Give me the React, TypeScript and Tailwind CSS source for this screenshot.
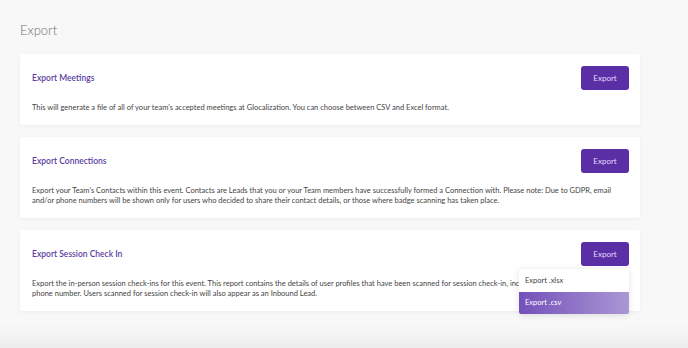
const cards = [
  {
    title: "Export Meetings",
    text: "This will generate a file of all of your team's accepted meetings at Glocalization. You can choose between CSV and Excel format.",
  },
  {
    title: "Export Connections",
    text: "Export your Team's Contacts within this event. Contacts are Leads that you or your Team members have successfully formed a Connection with. Please note: Due to GDPR, email and/or phone numbers will be shown only for users who decided to share their contact details, or those where badge scanning has taken place.",
  },
  {
    title: "Export Session Check In",
    text: "Export the in-person session check-ins for this event. This report contains the details of user profiles that have been scanned for session check-in, including names, emails and phone number. Users scanned for session check-in will also appear as an Inbound Lead.",
    menu: true,
  },
];

function ExportCard({ title, text, menu }: { title: string; text: string; menu?: boolean }) {
  return (
    <div className="rounded-[2px] bg-white pb-[12px] pl-[12px] pr-[11px] pt-[12px] shadow-[0_1px_4px_rgba(0,0,0,0.05)]">
      <div className="flex items-center justify-between">
        <h2 className="text-[8.5px] font-semibold leading-[12px] text-[#5b3d9f]">{title}</h2>
        <div className="relative flex">
          <button className="h-[24px] w-[48px] rounded-[3px] bg-[#5a2ea5] text-[8px] leading-[24px] text-[#e4d9ff]">
            Export
          </button>
          {menu && (
            <div className="absolute right-0 top-[27px] z-10 w-[110px] overflow-hidden rounded-[2px] bg-white shadow-[0_1px_6px_rgba(0,0,0,0.12)]">
              <div className="flex h-[23px] items-center px-[6px] text-[7.5px] text-[#444]">Export .xlsx</div>
              <div className="flex h-[22px] items-center bg-gradient-to-r from-[#7450b9] to-[#ab97d4] px-[6px] text-[7.5px] text-white">
                Export .csv
              </div>
            </div>
          )}
        </div>
      </div>
      <p className="mt-[13px] pr-[8px] text-[7.5px] leading-[10px] text-[#444]">{text}</p>
    </div>
  );
}

export default function App() {
  return (
    <div className="flex min-h-[348px] flex-col bg-[#f8f8f8] font-['Lato',sans-serif]">
      <div className="px-[20px] pt-[22px]">
        <h1 className="text-[13px] font-light leading-[16px] text-[#6f6f6f]">Export</h1>
        <div className="mt-[16px] flex w-[620px] flex-col gap-[12px]">
          {cards.map((c) => (
            <ExportCard key={c.title} {...c} />
          ))}
        </div>
      </div>
      <div className="mt-auto h-[24px] bg-gradient-to-b from-[#f8f8f8] to-[#ededed]" />
    </div>
  );
}
